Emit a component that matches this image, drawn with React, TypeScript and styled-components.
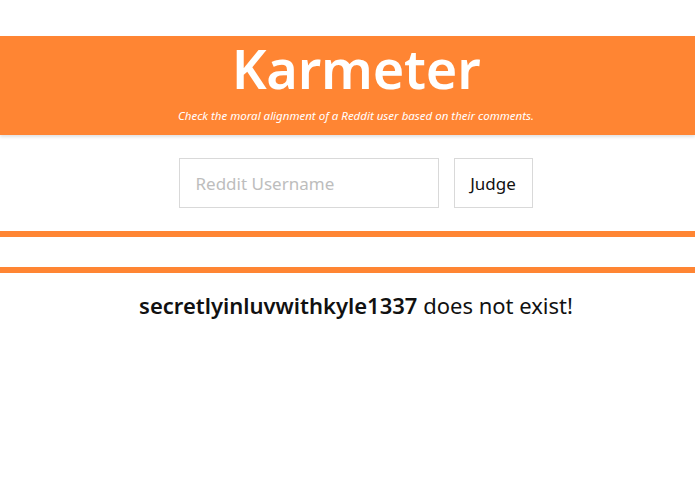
import React from "react";
import styled, { createGlobalStyle } from "styled-components";

const orange = "#ff8533";
// the original page's content sits a little right of centre
const offset = 17;

const GlobalStyle = createGlobalStyle`
  body {
    margin: 0;
    background: #fff;
    font-family: "Noto Sans", "Open Sans", sans-serif;
  }
`;

const Page = styled.div`
  padding-top: 36px;
`;

const Header = styled.header`
  background: ${orange};
  height: 99px;
  box-shadow: 0 2px 3px rgba(0, 0, 0, 0.12);
  display: flex;
  flex-direction: column;
  align-items: center;
  padding-left: ${offset}px;
  color: #fff;
`;

const Title = styled.h1`
  margin: 0;
  padding-top: 3px;
  font-size: 54px;
  font-weight: 600;
  line-height: 58px;
  letter-spacing: -0.2px;
`;

const Tagline = styled.p`
  margin: 12px 0 0;
  font-size: 11.5px;
  font-style: italic;
  line-height: 14px;
`;

const Form = styled.form`
  display: flex;
  justify-content: center;
  gap: 15px;
  margin-top: 23px;
  padding-left: ${offset - 1}px;
`;

const Input = styled.input`
  box-sizing: border-box;
  width: 260px;
  height: 50px;
  border: 1px solid #d9d9d9;
  padding: 0 16px;
  font-family: inherit;
  font-size: 17px;
  color: #333;
  outline: none;
  &::placeholder {
    color: #bdbdbd;
  }
`;

const Button = styled.button`
  box-sizing: border-box;
  width: 79px;
  height: 50px;
  border: 1px solid #d9d9d9;
  background: #fff;
  font-family: inherit;
  font-size: 17px;
  color: #111;
`;

const Rule = styled.hr<{ $gap: number }>`
  border: none;
  height: 6px;
  background: ${orange};
  margin: ${(p) => p.$gap}px 0 0;
`;

const Message = styled.p`
  margin: 17px 0 0;
  padding-left: ${offset}px;
  text-align: center;
  font-size: 22px;
  color: #111;
`;

const Username = styled.span`
  font-weight: 600;
`;

export default function App() {
  return (
    <Page>
      <GlobalStyle />
      <Header>
        <Title>Karmeter</Title>
        <Tagline>Check the moral alignment of a Reddit user based on their comments.</Tagline>
      </Header>
      <Form onSubmit={(e) => e.preventDefault()}>
        <Input placeholder="Reddit Username" />
        <Button type="submit">Judge</Button>
      </Form>
      <Rule $gap={23} />
      <Rule $gap={30} />
      <Message>
        <Username>secretlyinluvwithkyle1337</Username> does not exist!
      </Message>
    </Page>
  );
}
